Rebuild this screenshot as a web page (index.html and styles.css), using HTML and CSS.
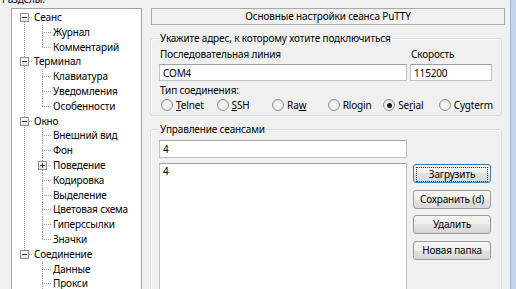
FILE: index.html
```html
<!DOCTYPE html>
<html lang="ru">
<head>
    <meta charset="UTF-8">
    <meta name="viewport" content="width=device-width, initial-scale=1.0">
    <title>Конфигурация PuTTY</title>
    <link rel="stylesheet" href="styles.css">
</head>
<body>
<div class="dialog">
    <!-- дерево разделов -->
    <div class="left">
        <div class="caption">Разделы:</div>
        <ul class="tree">
            <li class="root">
                <div class="row"><span class="exp"></span>Сеанс</div>
                <ul class="kids">
                    <li><div class="row">Журнал</div></li>
                    <li><div class="row">Комментарий</div></li>
                </ul>
            </li>
            <li class="root">
                <div class="row"><span class="exp"></span>Терминал</div>
                <ul class="kids">
                    <li><div class="row">Клавиатура</div></li>
                    <li><div class="row">Уведомления</div></li>
                    <li><div class="row">Особенности</div></li>
                </ul>
            </li>
            <li class="root">
                <div class="row"><span class="exp"></span>Окно</div>
                <ul class="kids">
                    <li><div class="row">Внешний вид</div></li>
                    <li><div class="row">Фон</div></li>
                    <li><div class="row"><span class="exp plus"></span>Поведение</div></li>
                    <li><div class="row">Кодировка</div></li>
                    <li><div class="row">Выделение</div></li>
                    <li><div class="row">Цветовая схема</div></li>
                    <li><div class="row">Гиперссылки</div></li>
                    <li><div class="row">Значки</div></li>
                </ul>
            </li>
            <li class="root">
                <div class="row"><span class="exp"></span>Соединение</div>
                <ul class="kids">
                    <li><div class="row">Данные</div></li>
                    <li><div class="row">Прокси</div></li>
                    <li><div class="row">Telnet</div></li>
                    <li><div class="row">Rlogin</div></li>
                    <li><div class="row">SSH</div></li>
                </ul>
            </li>
        </ul>
    </div>

    <!-- настройки сеанса -->
    <div class="right">
        <div class="title">Основные настройки сеанса PuTTY</div>

        <fieldset class="group addr">
            <legend>Укажите адрес, к которому хотите подключиться</legend>
            <div class="host-grid">
                <label class="lbl">Последовательная линия</label>
                <label class="lbl">Скорость</label>
                <input class="edit" type="text" value="COM4">
                <input class="edit" type="text" value="115200">
            </div>
            <div class="sub">Тип соединения:</div>
            <div class="radios">
                <span class="radio"><i class="dot"></i><span><u>T</u>elnet</span></span>
                <span class="radio"><i class="dot"></i><span><u>S</u>SH</span></span>
                <span class="radio"><i class="dot"></i><span>Ra<u>w</u></span></span>
                <span class="radio"><i class="dot"></i><span>Rlogin</span></span>
                <span class="radio"><i class="dot on"></i><span>Se<u>r</u>ial</span></span>
                <span class="radio"><i class="dot"></i><span>Cygterm</span></span>
            </div>
        </fieldset>

        <fieldset class="group sessions">
            <legend>Управление сеансами</legend>
            <div class="sess-grid">
                <input class="edit tall" type="text" value="4">
                <div class="list">4</div>
                <div class="buttons">
                    <button class="btn default"><span class="focus">Загрузить</span></button>
                    <button class="btn">Сохранить (d)</button>
                    <button class="btn">Удалить</button>
                    <button class="btn">Новая папка</button>
                </div>
            </div>
        </fieldset>
    </div>

    <!-- край окна -->
    <div class="frame"></div>
</div>
</body>
</html>
```

FILE: styles.css
```css
html, body {
    margin: 0;
    padding: 0;
}
body {
    width: 516px;
    height: 289px;
    overflow: hidden;
    background-color: #f0f0f0;
    color: #000;
    font-family: "Noto Sans", "Liberation Sans", sans-serif;
    font-size: 10px;
    letter-spacing: -0.15px;
    line-height: 13px;
}
.dialog {
    display: flex;
    height: 289px;
}
.left {
    width: 150px;
    flex: none;
}
.caption {
    height: 13px;
    margin: -7px 0 2px 2px;
}
/* дерево */
.tree {
    list-style: none;
    margin: 0 0 0 11px;
    padding: 1px 0 0;
    width: 131px;
    height: 300px;
    box-sizing: border-box;
    overflow: hidden;
    background-color: #fff;
    border: 1px solid #9ea3a9;
}
.tree ul {
    list-style: none;
    margin: 0;
    padding: 0;
}
.tree li {
    position: relative;
}
.row {
    position: relative;
    height: 14.8px;
    line-height: 14.8px;
    padding-left: 22px;
    white-space: nowrap;
}
.kids .row {
    padding-left: 41px;
}
/* горизонтальные линии */
.row::before {
    content: "";
    position: absolute;
    top: 7px;
    left: 12px;
    width: 8px;
    border-top: 1px dotted #a0a0a0;
}
.kids .row::before {
    left: 30px;
    width: 9px;
}
/* вертикальные линии */
.root::before {
    content: "";
    position: absolute;
    left: 12px;
    top: 7px;
    bottom: -7px;
    border-left: 1px dotted #a0a0a0;
}
.root:last-child::before {
    display: none;
}
.kids li::after {
    content: "";
    position: absolute;
    left: 30px;
    top: 0;
    bottom: 0;
    border-left: 1px dotted #a0a0a0;
}
.kids li:last-child::after {
    bottom: auto;
    height: 7px;
}
/* кнопки +/- */
.exp {
    position: absolute;
    left: 8px;
    top: 3px;
    width: 9px;
    height: 9px;
    box-sizing: border-box;
    border: 1px solid #919191;
    background: linear-gradient(#fff, #e4e4e4);
    z-index: 1;
}
.kids .exp {
    left: 26px;
}
.exp::before {
    content: "";
    position: absolute;
    left: 1px;
    top: 3px;
    width: 5px;
    height: 1px;
    background-color: #333;
}
.exp.plus::after {
    content: "";
    position: absolute;
    left: 3px;
    top: 1px;
    width: 1px;
    height: 5px;
    background-color: #333;
}

/* правая часть */
.right {
    width: 355px;
    flex: none;
}
.title {
    margin: 8px 0 0 1px;
    height: 17px;
    line-height: 15px;
    box-sizing: border-box;
    border: 1px solid #a8a8a8;
    text-align: center;
}
.group {
    margin: 0;
    width: 352px;
    box-sizing: border-box;
    padding: 3px 8px 3px;
    border: 1px solid #d5dfe5;
    border-radius: 3px;
    box-shadow: inset 1px 1px 0 #fff;
}
.group legend {
    padding: 0 1px;
    line-height: 13px;
}
.addr {
    margin-top: 6.5px;
}
.sessions {
    margin-top: 7.5px;
    padding-top: 4px;
}
.host-grid {
    display: grid;
    grid-template-columns: 248px 82px;
    column-gap: 3px;
    row-gap: 3.5px;
}
.lbl {
    padding-left: 1px;
}
.edit {
    display: block;
    width: 100%;
    height: 17px;
    box-sizing: border-box;
    margin: 0;
    padding: 0 3px;
    font: inherit;
    letter-spacing: inherit;
    color: #000;
    background-color: #fff;
    border: 1px solid #bfc2c8;
    border-top-color: #9ea1a7;
    outline: none;
}
.edit.tall {
    height: 18px;
}
.sub {
    margin-top: 2.5px;
    padding-left: 1px;
}
.radios {
    display: grid;
    grid-template-columns: repeat(6, 1fr);
    margin-top: 2px;
}
.radio {
    display: flex;
    align-items: center;
    gap: 3px;
    height: 13px;
    padding-left: 2px;
    white-space: nowrap;
}
.dot {
    position: relative;
    flex: none;
    width: 12px;
    height: 12px;
    box-sizing: border-box;
    border: 1px solid #8e8f8f;
    border-radius: 50%;
    background: radial-gradient(circle at 50% 60%, #fdfdfd, #dedede);
}
.dot.on::after {
    content: "";
    position: absolute;
    left: 2.5px;
    top: 2.5px;
    width: 5px;
    height: 5px;
    border-radius: 50%;
    background-color: #1b1b1b;
}
.sess-grid {
    display: grid;
    grid-template-columns: 248px 78px;
    column-gap: 6px;
    row-gap: 5px;
}
.list {
    grid-column: 1;
    height: 150px;
    padding: 1px 3px;
    background-color: #fff;
    border: 1px solid #bfc2c8;
    border-top-color: #9ea1a7;
}
.buttons {
    display: flex;
    flex-direction: column;
    gap: 6.7px;
    padding-top: 1px;
}
.btn {
    height: 19px;
    margin: 0;
    padding: 0;
    font: inherit;
    letter-spacing: inherit;
    color: #000;
    border: 1px solid #9a9a9a;
    border-radius: 3px;
    background: linear-gradient(#f6f6f6 0, #eeeeee 50%, #e2e2e2 50%, #d8d8d8 100%);
}
.btn.default {
    border-color: #3c7fb1;
    padding: 2px;
}
.focus {
    display: block;
    height: 13px;
    line-height: 12px;
    border: 1px dotted #333;
}
.frame {
    flex: 1;
    margin-left: 5px;
    background-color: #c2d6ee;
    border-left: 1px solid #9fb2c8;
}
```
